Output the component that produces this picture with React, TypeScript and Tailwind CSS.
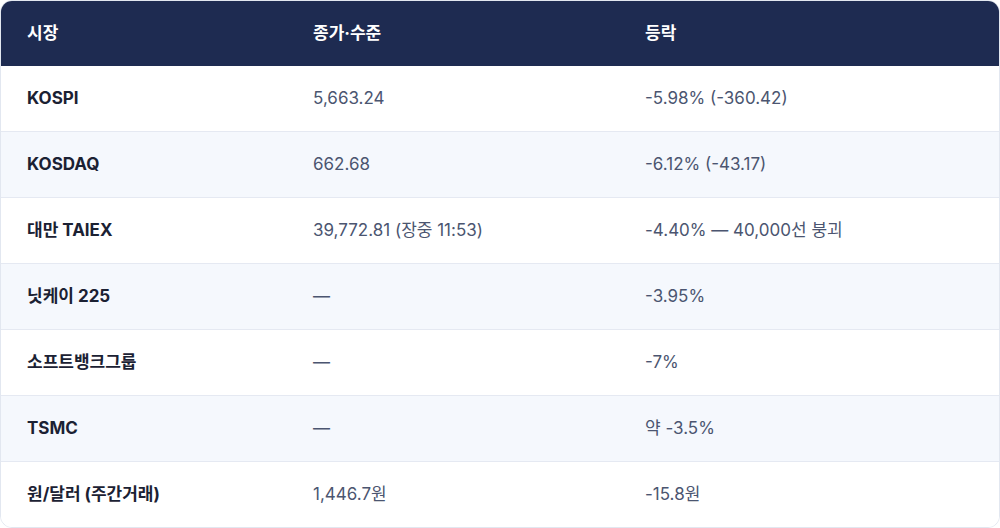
import React from "react";

const rows: [string, string, string][] = [
  ["KOSPI", "5,663.24", "-5.98% (-360.42)"],
  ["KOSDAQ", "662.68", "-6.12% (-43.17)"],
  ["대만 TAIEX", "39,772.81 (장중 11:53)", "-4.40% — 40,000선 붕괴"],
  ["닛케이 225", "—", "-3.95%"],
  ["소프트뱅크그룹", "—", "-7%"],
  ["TSMC", "—", "약 -3.5%"],
  ["원/달러 (주간거래)", "1,446.7원", "-15.8원"],
];

export default function App() {
  return (
    <div
      className="w-[1000px] h-[528px] bg-white"
      style={{ fontFamily: 'Inter, "Noto Sans CJK KR", sans-serif' }}
    >
      <div className="h-full border border-[#e2e7f0] rounded-[12px] overflow-hidden flex flex-col">
        <div className="h-[65px] shrink-0 bg-[#1e2b51] text-white font-bold text-[17px] grid grid-cols-[286px_332px_1fr] items-center px-[26px]">
          <div>시장</div>
          <div>종가·수준</div>
          <div>등락</div>
        </div>
        {rows.map((r, i) => (
          <div
            key={i}
            className={`h-[66px] shrink-0 grid grid-cols-[286px_332px_1fr] items-center px-[26px] text-[17px] ${
              i % 2 === 1 ? "bg-[#f5f8fd]" : "bg-white"
            } ${i < rows.length - 1 ? "border-b border-[#e5e9f2]" : ""}`}
          >
            <div className="font-bold text-[#1b2133]">{r[0]}</div>
            <div className="text-[#4b5570]">{r[1]}</div>
            <div className="text-[#4b5570]">{r[2]}</div>
          </div>
        ))}
      </div>
    </div>
  );
}
